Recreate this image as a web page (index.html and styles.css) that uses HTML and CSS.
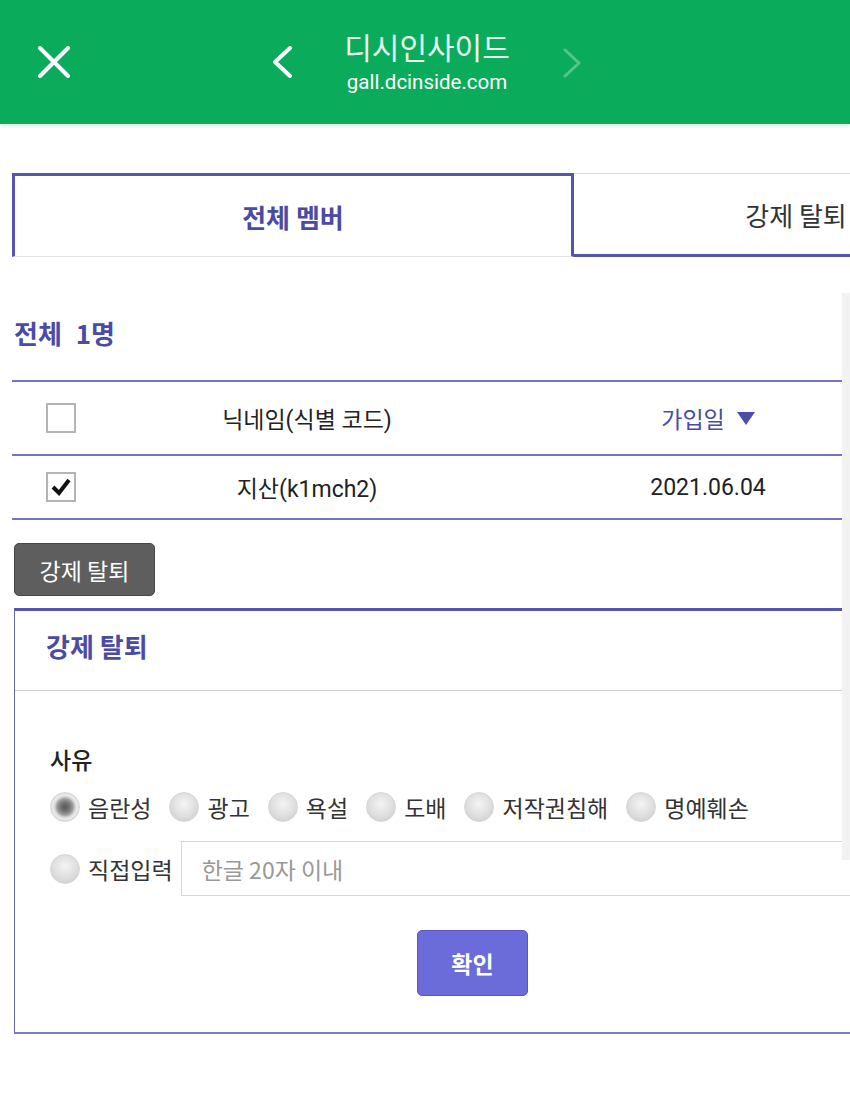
FILE: index.html
```html
<!DOCTYPE html>
<html>
<head>
    <meta charset="UTF-8">
    <title>디시인사이드 - 멤버 관리</title>
    <link rel="stylesheet" href="styles.css">
</head>
<body>
<div class="page">
    <div class="topBar">
        <svg class="icoClose" width="32" height="32" viewBox="0 0 32 32">
            <path d="M2 2 L30 30 M30 2 L2 30" stroke="#fff" stroke-width="4" stroke-linecap="round" fill="none"/>
        </svg>
        <div class="navBox">
            <svg class="icoPrev" width="20" height="32" viewBox="0 0 20 32">
                <path d="M18 2 L3 16 L18 30" stroke="#fff" stroke-width="4" stroke-linecap="round" stroke-linejoin="round" fill="none"/>
            </svg>
            <div class="titleBox">
                <p class="siteName">디시인사이드</p>
                <p class="siteUrl">gall.dcinside.com</p>
            </div>
            <svg class="icoNext" width="20" height="32" viewBox="0 0 20 32">
                <path d="M3 4 L17 17 L3 30" stroke="#fff" stroke-width="3" stroke-linecap="round" stroke-linejoin="round" fill="none"/>
            </svg>
        </div>
    </div>

    <div class="tabList">
        <div class="tab on">전체 멤버</div>
        <div class="tab">강제 탈퇴</div>
    </div>

    <h2 class="totalNum">전체 <em>1명</em></h2>

    <div class="memberTable">
        <div class="row head">
            <div class="cell chk"><span class="chkBox"></span></div>
            <div class="cell">닉네임(식별 코드)</div>
            <div class="cell sort">가입일
                <svg width="18" height="13" viewBox="0 0 18 13"><path d="M0 0 H18 L9 13 Z" fill="#4d4dab"/></svg>
            </div>
        </div>
        <div class="row">
            <div class="cell chk">
                <span class="chkBox">
                    <svg width="22" height="22" viewBox="0 0 22 22"><path d="M3 11 L9 17 L19 4" stroke="#111" stroke-width="4" fill="none"/></svg>
                </span>
            </div>
            <div class="cell">지산(k1mch2)</div>
            <div class="cell">2021.06.04</div>
        </div>
    </div>

    <button class="btnGray">강제 탈퇴</button>

    <div class="layerBox">
        <h3 class="layerTit">강제 탈퇴</h3>
        <div class="layerCon">
            <p class="reasonTit">사유</p>
            <ul class="radioList">
                <li><span class="radio on"></span>음란성</li>
                <li><span class="radio"></span>광고</li>
                <li><span class="radio"></span>욕설</li>
                <li><span class="radio"></span>도배</li>
                <li><span class="radio"></span>저작권침해</li>
                <li><span class="radio"></span>명예훼손</li>
            </ul>
            <div class="directRow">
                <span class="radio"></span>
                <span class="directLabel">직접입력</span>
                <input class="reasonInput" type="text" placeholder="한글 20자 이내">
            </div>
            <div class="btnBox">
                <button class="btnBlue">확인</button>
            </div>
        </div>
    </div>

    <div class="scrollTrack"></div>
</div>
</body>
</html>
```

FILE: styles.css
```css
* {
    margin: 0;
    padding: 0;
    box-sizing: border-box;
}

body {
    font-family: Roboto, "Noto Sans CJK KR", sans-serif;
    font-size: 23px;
    color: #222;
    background: #fff;
}

ul, li {
    list-style: none;
}

em {
    font-style: normal;
}

.page {
    position: relative;
    width: 850px;
    height: 1117px;
    overflow: hidden;
}

/* top bar */
.topBar {
    display: flex;
    align-items: center;
    height: 124px;
    padding-left: 38px;
    background: #0aac5c;
    box-shadow: 0 2px 4px rgba(0, 0, 0, 0.12);
}

.navBox {
    display: flex;
    align-items: center;
    margin-left: 202px;
}

.titleBox {
    width: 230px;
    margin: 0 20px;
    text-align: center;
    color: #fff;
}

.siteName {
    font-family: "Noto Sans CJK KR", sans-serif;
    font-size: 30px;
    line-height: 32px;
    color: #e9f7ef;
}

.siteUrl {
    margin-top: 8px;
    font-size: 20.5px;
    line-height: 24px;
}

.icoNext {
    opacity: 0.3;
}

/* tabs */
.tabList {
    display: flex;
    width: 1006px;
    margin: 49px 0 0 12px;
}

.tab {
    display: flex;
    align-items: center;
    justify-content: center;
    height: 84px;
    font-family: "Noto Sans CJK KR", sans-serif;
    font-size: 26px;
    color: #333;
}

.tab:first-child {
    width: 562px;
    border: 3px solid #5555b0;
    border-bottom: 1px solid #e4e4e4;
}

.tab:last-child {
    width: 444px;
    border-top: 1px solid #dcdcdc;
    border-bottom: 3px solid #5555b0;
}

.tab.on {
    font-weight: bold;
    color: #4b4ba3;
}

/* total */
.totalNum {
    margin: 58px 0 0 14px;
    font-family: "Noto Sans CJK KR", sans-serif;
    font-size: 26px;
    line-height: 36px;
    color: #4b4ba3;
}

.totalNum em {
    margin-left: 8px;
}

/* member table */
.memberTable {
    width: 900px;
    margin: 29px 0 0 12px;
    border-top: 2px solid #7474c2;
}

.memberTable .row {
    display: grid;
    grid-template-columns: 98px 394px 1fr;
    height: 64px;
    border-bottom: 2px solid #7474c2;
}

.memberTable .row.head {
    height: 74px;
}

.memberTable .cell {
    display: flex;
    align-items: center;
    justify-content: center;
}

.memberTable .sort {
    gap: 12px;
    color: #4b4ba3;
}

.chkBox {
    display: flex;
    align-items: center;
    justify-content: center;
    width: 30px;
    height: 30px;
    border: 2px solid #b4b4b4;
    background: #fff;
}

/* buttons */
.btnGray {
    display: block;
    width: 141px;
    height: 53px;
    margin: 23px 0 0 14px;
    font-family: "Noto Sans CJK KR", sans-serif;
    font-size: 23px;
    color: #fff;
    background: #5e5e5e;
    border: 1px solid #474747;
    border-radius: 5px;
}

.btnBlue {
    width: 111px;
    height: 66px;
    font-family: "Noto Sans CJK KR", sans-serif;
    font-size: 23px;
    font-weight: bold;
    color: #fff;
    background: #6b6bd9;
    border: 1px solid #5757c0;
    border-radius: 5px;
}

/* layer */
.layerBox {
    width: 916px;
    margin: 12px 0 0 14px;
    border-top: 3px solid #5555b0;
    border-left: 1px solid #6a6ab2;
    border-bottom: 2px solid #7d7db9;
}

.layerTit {
    height: 80px;
    padding-left: 31px;
    font-family: "Noto Sans CJK KR", sans-serif;
    font-size: 26px;
    line-height: 70px;
    color: #4b4ba3;
    border-bottom: 1px solid #cfcfcf;
}

.layerCon {
    padding: 53px 0 36px 35px;
}

.reasonTit {
    font-family: "Noto Sans CJK KR", sans-serif;
    font-weight: 500;
    line-height: 30px;
    color: #222;
}

.radioList {
    display: flex;
    align-items: center;
    gap: 18px;
    height: 40px;
    margin-top: 13px;
    color: #333;
}

.radioList li {
    display: flex;
    align-items: center;
    gap: 8px;
}

.radio {
    display: inline-block;
    flex-shrink: 0;
    width: 30px;
    height: 30px;
    border-radius: 50%;
    border: 1px solid #d6d6d6;
    background: radial-gradient(circle at 50% 40%, #f4f4f4 0, #dedede 55%, #c8c8c8 100%);
}

.radio.on {
    background: radial-gradient(circle, #5a5a5a 0, #707070 4px, #9c9c9c 8px, #cfcfcf 10px, #ececec 12px, #d6d6d6 15px);
}

.directRow {
    display: flex;
    align-items: center;
    margin-top: 14px;
    color: #333;
}

.directLabel {
    margin-left: 8px;
}

.reasonInput {
    width: 720px;
    height: 55px;
    margin-left: 8px;
    padding-left: 20px;
    font-family: "Noto Sans CJK KR", sans-serif;
    font-size: 23px;
    border: 1px solid #d6d6d6;
    outline: none;
}

.reasonInput::placeholder {
    color: #999;
}

.btnBox {
    margin-top: 34px;
    padding-right: 35px;
    text-align: center;
}

.scrollTrack {
    position: absolute;
    top: 293px;
    right: 0;
    width: 8px;
    height: 567px;
    background: #f2f2f2;
}
```
